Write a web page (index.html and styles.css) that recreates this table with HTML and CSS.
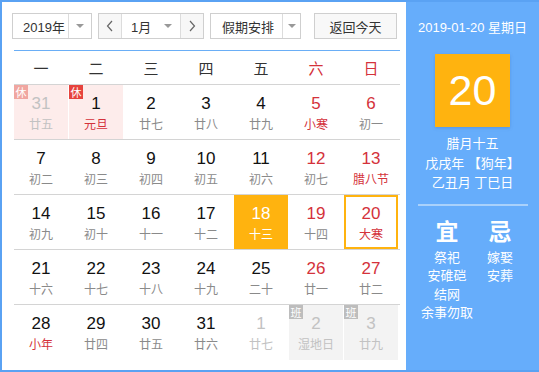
FILE: index.html
```html
<!DOCTYPE html>
<html lang="zh-CN">
<head>
<meta charset="utf-8">
<title>万年历</title>
<link rel="stylesheet" href="styles.css">
</head>
<body>
<div class="cal">
  <div class="main">
    <div class="controls">
      <div class="sel sel-year"><span class="val">2019年</span><span class="drop"><i class="tri"></i></span></div>
      <div class="sel sel-month">
        <span class="btn"><svg width="8" height="12" viewBox="0 0 8 12"><polyline points="6,1 1.5,6 6,11" fill="none" stroke="#666" stroke-width="1.2"/></svg></span>
        <span class="val month">1月<i class="tri"></i></span>
        <span class="btn"><svg width="8" height="12" viewBox="0 0 8 12"><polyline points="2,1 6.5,6 2,11" fill="none" stroke="#666" stroke-width="1.2"/></svg></span>
      </div>
      <div class="sel sel-holiday"><span class="val">假期安排</span><span class="drop"><i class="tri"></i></span></div>
      <div class="today-btn">返回今天</div>
    </div>
    <div class="table">
      <div class="week head">
        <div>一</div><div>二</div><div>三</div><div>四</div><div>五</div><div class="red">六</div><div class="red">日</div>
      </div>
      <div class="week">
        <div class="d other rest"><span class="badge xiu faded">休</span><b>31</b><span>廿五</span></div>
        <div class="d rest"><span class="badge xiu">休</span><b>1</b><span class="red">元旦</span></div>
        <div class="d"><b>2</b><span>廿七</span></div>
        <div class="d"><b>3</b><span>廿八</span></div>
        <div class="d"><b>4</b><span>廿九</span></div>
        <div class="d"><b class="red">5</b><span class="red">小寒</span></div>
        <div class="d"><b class="red">6</b><span>初一</span></div>
      </div>
      <div class="week">
        <div class="d"><b>7</b><span>初二</span></div>
        <div class="d"><b>8</b><span>初三</span></div>
        <div class="d"><b>9</b><span>初四</span></div>
        <div class="d"><b>10</b><span>初五</span></div>
        <div class="d"><b>11</b><span>初六</span></div>
        <div class="d"><b class="red">12</b><span>初七</span></div>
        <div class="d"><b class="red">13</b><span class="red">腊八节</span></div>
      </div>
      <div class="week">
        <div class="d"><b>14</b><span>初九</span></div>
        <div class="d"><b>15</b><span>初十</span></div>
        <div class="d"><b>16</b><span>十一</span></div>
        <div class="d"><b>17</b><span>十二</span></div>
        <div class="d selected"><b>18</b><span>十三</span></div>
        <div class="d"><b class="red">19</b><span>十四</span></div>
        <div class="d today"><b class="red">20</b><span class="red">大寒</span></div>
      </div>
      <div class="week">
        <div class="d"><b>21</b><span>十六</span></div>
        <div class="d"><b>22</b><span>十七</span></div>
        <div class="d"><b>23</b><span>十八</span></div>
        <div class="d"><b>24</b><span>十九</span></div>
        <div class="d"><b>25</b><span>二十</span></div>
        <div class="d"><b class="red">26</b><span>廿一</span></div>
        <div class="d"><b class="red">27</b><span>廿二</span></div>
      </div>
      <div class="week last">
        <div class="d"><b>28</b><span class="red">小年</span></div>
        <div class="d"><b>29</b><span>廿四</span></div>
        <div class="d"><b>30</b><span>廿五</span></div>
        <div class="d"><b>31</b><span>廿六</span></div>
        <div class="d other"><b>1</b><span>廿七</span></div>
        <div class="d other work"><span class="badge ban">班</span><b>2</b><span>湿地日</span></div>
        <div class="d other work"><span class="badge ban">班</span><b>3</b><span>廿九</span></div>
      </div>
    </div>
  </div>
  <div class="side">
    <div class="date">2019-01-20 星期日</div>
    <div class="bigday">20</div>
    <div class="lunar">
      <div>腊月十五</div>
      <div>戊戌年 【狗年】</div>
      <div>乙丑月 丁巳日</div>
    </div>
    <div class="divider"></div>
    <div class="yiji">
      <div class="col">
        <div class="title">宜</div>
        <div>祭祀</div><div>安碓硙</div><div>结网</div><div>余事勿取</div>
      </div>
      <div class="col">
        <div class="title">忌</div>
        <div>嫁娶</div><div>安葬</div>
      </div>
    </div>
  </div>
</div>
</body>
</html>
```

FILE: styles.css
```css
* { box-sizing: border-box; }
body {
  margin: 0;
  font-family: "Liberation Sans", "Noto Sans CJK SC", sans-serif;
  background: #fff;
}
.cal {
  display: flex;
  width: 539px;
  height: 372px;
  border: 2px solid #5aa2f3;
  border-right: none;
}
.main {
  width: 404px;
  padding: 11px 0 0 10px;
  background: #fff;
}
.controls {
  display: flex;
  height: 26px;
  margin-bottom: 11px;
  font-size: 13px;
  color: #333;
  white-space: nowrap;
}
.sel {
  display: flex;
  border: 1px solid #cfcfcf;
  background: #fff;
  height: 26px;
}
.sel .val {
  display: flex;
  align-items: center;
  justify-content: flex-start;
}
.sel .drop {
  display: flex;
  align-items: center;
  justify-content: center;
  border-left: 1px solid #dcdcdc;
}
.tri {
  display: inline-block;
  width: 0;
  height: 0;
  border-left: 4px solid transparent;
  border-right: 4px solid transparent;
  border-top: 4px solid #999;
}
.sel-year { width: 80px; }
.sel-year .val { width: 55px; padding-left: 10px; }
.sel-year .drop { flex: 1; }
.sel-month { width: 106px; margin-left: 6px; }
.sel-month .btn {
  width: 23px;
  display: flex;
  align-items: center;
  justify-content: center;
  background: #f7f7f7;
}
.sel-month .btn:first-child { border-right: 1px solid #dcdcdc; }
.sel-month .btn:last-child { border-left: 1px solid #dcdcdc; }
.sel-month .month {
  flex: 1;
  padding-left: 9px;
}
.sel-month .month .tri { margin-left: 13px; }
.sel-holiday { width: 91px; margin-left: 6px; }
.sel-holiday .val { width: 71px; padding-left: 11px; }
.sel-holiday .drop { flex: 1; }
.today-btn {
  margin-left: 13px;
  width: 83px;
  height: 26px;
  border: 1px solid #cfcfcf;
  background: #f8f8f8;
  display: flex;
  align-items: center;
  justify-content: center;
}
.table {
  width: 386px;
  margin-left: 2px;
  border-top: 1px solid #6aaef6;
}
.week {
  display: grid;
  grid-template-columns: repeat(7, 54px);
  column-gap: 1px;
  height: 55px;
  border-bottom: 1px solid #d4d4d4;
}
.week.last { border-bottom: none; }
.week.head {
  height: 34px;
  align-items: center;
  text-align: center;
  font-family: "Noto Sans CJK SC", sans-serif;
  font-size: 15px;
  color: #333;
}
.red { color: #d4323b !important; }
.d {
  position: relative;
  display: flex;
  flex-direction: column;
  align-items: center;
  padding-top: 9px;
}
.d b {
  font-weight: normal;
  font-size: 17px;
  line-height: 20px;
  color: #111;
}
.d span {
  margin-top: 2px;
  font-family: "Noto Sans CJK SC", sans-serif;
  font-size: 12px;
  line-height: 16px;
  color: #8a8a8a;
}
.d.rest { background: #fdeceb; }
.d.work { background: #f3f3f3; }
.d.other b, .d.other span { color: #c2c2c2; }
.d.selected { background: #ffb30f; }
.d.selected b, .d.selected span { color: #fff; }
.d.today { border: 2px solid #ffb30f; padding-top: 7px; }
.d .badge {
  position: absolute;
  left: 0;
  top: 0;
  margin: 0;
  width: 14px;
  height: 14px;
  font-size: 11px;
  line-height: 14px;
  text-align: center;
  color: #fff;
}
.badge.xiu { background: #e6433d; color: #fff; }
.badge.xiu.faded { background: #f0a6a0; color: #fff; }
.d .badge.ban { background: #bdbdbd; color: #fff; }
.side {
  flex: 1;
  background: #66adfb;
  color: #fff;
  font-family: "Liberation Sans", "Noto Sans CJK SC", sans-serif;
  display: flex;
  flex-direction: column;
  align-items: center;
  padding-top: 17px;
}
.date {
  font-size: 13px;
  line-height: 18px;
}
.bigday {
  margin-top: 17px;
  width: 75px;
  height: 73px;
  background: #ffb30f;
  box-shadow: 0 1px 3px rgba(60, 110, 180, 0.35);
  font-size: 43px;
  line-height: 73px;
  text-align: center;
  color: #fff;
}
.lunar {
  margin-top: 7px;
  font-size: 13px;
  line-height: 19.5px;
  text-align: center;
}
.divider {
  margin-top: 11px;
  width: 110px;
  height: 2px;
  background: #a9d1fb;
}
.yiji {
  display: flex;
  align-self: flex-start;
  margin-left: 11px;
  gap: 3px;
  margin-top: 13px;
  font-size: 13px;
  line-height: 18.5px;
}
.yiji .col {
  display: flex;
  flex-direction: column;
  align-items: center;
  width: 60px;
}
.yiji .col:last-child { width: 40px; }
.yiji .title {
  font-size: 23px;
  line-height: 26px;
  margin-bottom: 4px;
  font-weight: 600;
}
```
